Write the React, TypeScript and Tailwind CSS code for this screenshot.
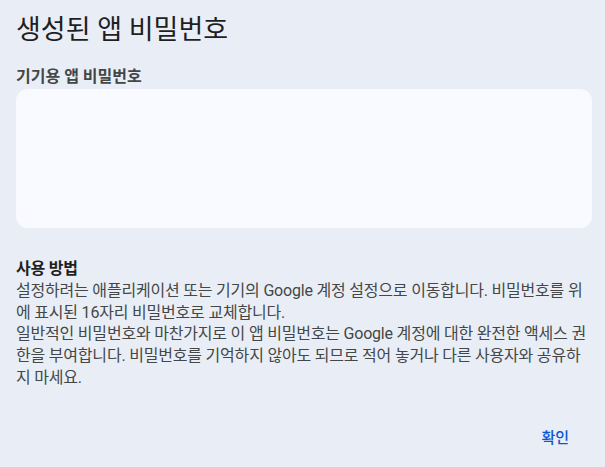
import React from 'react';

export default function App() {
  return (
    <div
      className="w-[605px] h-[467px] bg-[#e9eef6] pl-4 pr-[13px] flex flex-col text-[#1f1f1f]"
      style={{ fontFamily: 'Roboto, "Noto Sans CJK KR", sans-serif' }}
    >
      <h1 className="text-[27px] leading-[32px] mt-[14px] text-[#1f1f1f]">생성된 앱 비밀번호</h1>
      <div className="mt-[21px] text-[16px] leading-[20px] font-bold text-[#444746]">기기용 앱 비밀번호</div>
      <div className="mt-[2px] h-[139px] w-[576px] rounded-[12px] bg-[#f8faff]" />
      <div className="mt-[30px] text-[16px] leading-[21.8px] tracking-[-0.2px] text-[#444746] break-all">
        <div className="font-bold text-[#1f1f1f]">사용 방법</div>
        <p>
          설정하려는 애플리케이션 또는 기기의 Google 계정 설정으로 이동합니다. 비밀번호를 위에 표시된 16자리
          비밀번호로 교체합니다.
        </p>
        <p>
          일반적인 비밀번호와 마찬가지로 이 앱 비밀번호는 Google 계정에 대한 완전한 액세스 권한을 부여합니다.
          비밀번호를 기억하지 않아도 되므로 적어 놓거나 다른 사용자와 공유하지 마세요.
        </p>
      </div>
      <div className="mt-auto mb-[9px] flex justify-end">
        <button className="px-3 h-10 text-[15px] font-medium text-[#0b57d0] rounded-full mr-[11px]">확인</button>
      </div>
    </div>
  );
}
